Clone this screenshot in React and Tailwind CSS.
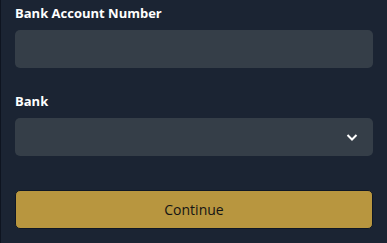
import React from 'react';

export default function App() {
  return (
    <div className="h-[243px] w-[387px] bg-[#1b2433] border-l border-[#0e1420] font-['Open_Sans',sans-serif] px-[14px] pt-[3px]">
      <label className="block text-[13px] font-bold text-white leading-[20px]">Bank Account Number</label>
      <input
        type="text"
        className="mt-[7px] block h-[38px] w-full rounded-[5px] bg-[#353e48] outline-none px-3 text-white text-[13px]"
      />

      <label className="mt-[23px] block text-[13px] font-bold text-white leading-[20px]">Bank</label>
      <div className="relative mt-[7px]">
        <select className="block h-[38px] w-full appearance-none rounded-[5px] bg-[#353e48] outline-none px-3 text-white text-[13px]">
          <option value=""></option>
        </select>
        <svg
          className="pointer-events-none absolute right-[15px] top-[15px] h-[9px] w-[12px]"
          viewBox="0 0 12 9"
          fill="none"
          stroke="white"
          strokeWidth="2"
        >
          <path d="M1.5 2 L6 6.5 L10.5 2" />
        </svg>
      </div>

      <button className="mt-[34px] block h-[39px] w-full rounded-[5px] bg-[#b8963f] border border-[#0e1726] text-[14px] text-[#141414] font-medium">
        Continue
      </button>
    </div>
  );
}
